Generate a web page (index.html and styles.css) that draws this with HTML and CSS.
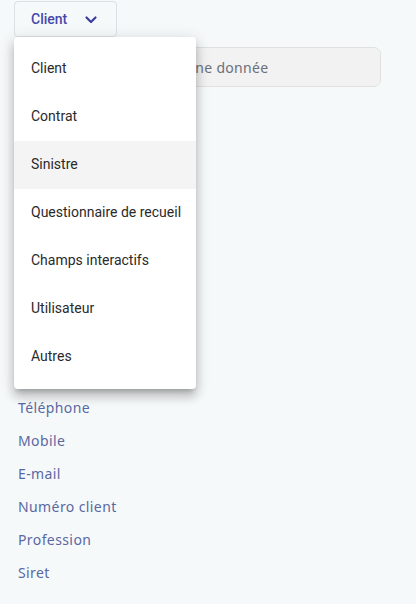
FILE: index.html
```html
<!DOCTYPE html>
<html lang="fr">
<head>
  <meta charset="UTF-8" />
  <meta name="viewport" content="width=device-width, initial-scale=1.0" />
  <title>Données</title>
  <link rel="stylesheet" href="styles.css">
</head>
<body>

  <div class="toolbar">
    <button class="select-btn" type="button">
      Client
      <svg class="chevron" width="14" height="14" viewBox="0 0 14 14">
        <path d="M2.5 4.5 L7 9 L11.5 4.5" fill="none" stroke="currentColor" stroke-width="2.2" stroke-linecap="round" stroke-linejoin="round"/>
      </svg>
    </button>

    <!-- menu ouvert -->
    <ul class="menu">
      <li>Client</li>
      <li>Contrat</li>
      <li class="active">Sinistre</li>
      <li>Questionnaire de recueil</li>
      <li>Champs interactifs</li>
      <li>Utilisateur</li>
      <li>Autres</li>
    </ul>
  </div>

  <div class="search">
    <input type="text" placeholder="Rechercher une donnée" />
  </div>

  <!-- les premiers champs sont masqués par le menu -->
  <ul class="fields">
    <li>Téléphone</li>
    <li>Mobile</li>
    <li>E-mail</li>
    <li>Numéro client</li>
    <li>Profession</li>
    <li>Siret</li>
  </ul>

</body>
</html>
```

FILE: styles.css
```css
body {
  margin: 0;
  background: #f6f9fa;
  font-family: 'Noto Sans', sans-serif;
  color: #333;
  overflow: hidden;
}

.toolbar {
  position: relative;
  padding: 1px 14px 0;
  height: 36px;
}

.select-btn {
  display: flex;
  align-items: center;
  gap: 17px;
  height: 36px;
  width: 103px;
  padding: 0 0 0 16px;
  background: #f6f9fa;
  border: 1px solid #dcdfe3;
  border-radius: 4px;
  font-family: 'Roboto', sans-serif;
  font-size: 14px;
  font-weight: 500;
  color: #4648a8;
  cursor: pointer;
}

.chevron {
  margin-top: 2px;
  color: #3a3d9a;
}

.menu {
  position: absolute;
  top: 37px;
  left: 14px;
  z-index: 2;
  width: 182px;
  margin: 0;
  padding: 8px 0;
  list-style: none;
  background: #fff;
  border-radius: 4px;
  box-shadow: 0 5px 5px -3px rgba(0, 0, 0, 0.2), 0 8px 10px 1px rgba(0, 0, 0, 0.14), 0 3px 14px 2px rgba(0, 0, 0, 0.12);
}

.menu li {
  height: 48px;
  line-height: 47px;
  padding: 0 16px 0 17px;
  font-family: 'Roboto', sans-serif;
  font-size: 14px;
  color: #2a2a2a;
  white-space: nowrap;
}

.menu li.active {
  background: #f4f4f4;
}

.search {
  padding: 10px 35px 0 14px;
}

.search input {
  box-sizing: border-box;
  width: 100%;
  height: 40px;
  padding: 0 12px 0 90px;
  background: #f2f2f2;
  border: 1px solid #e0e0e0;
  border-radius: 7px;
  font-family: 'Noto Sans', sans-serif;
  font-size: 14px;
  letter-spacing: 0.3px;
}

.search input::placeholder {
  color: #6b6f7a;
}

.fields {
  list-style: none;
  margin: 0;
  padding: 304px 0 0 18px;
}

.fields li {
  height: 33px;
  line-height: 33px;
  font-size: 14px;
  letter-spacing: 0.4px;
  color: #5a68a2;
}
```
